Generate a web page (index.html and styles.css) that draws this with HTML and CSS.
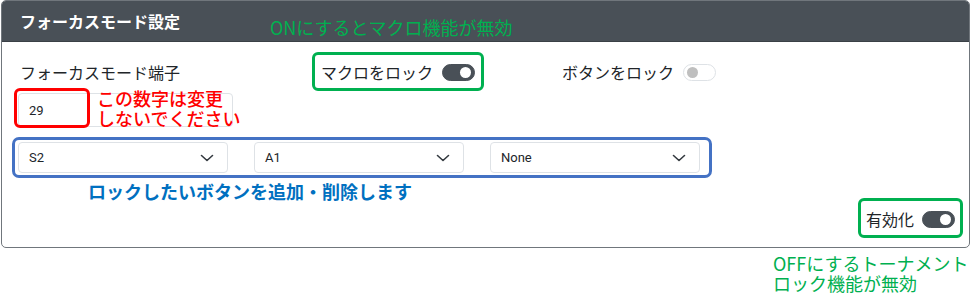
FILE: index.html
```html
<!DOCTYPE html>
<html lang="ja">
<head>
    <meta charset="UTF-8">
    <title>フォーカスモード設定</title>
    <link rel="stylesheet" href="styles.css">
</head>
<body>
    <div class="shot">
        <div class="card">
            <div class="card-header">
                <h5>フォーカスモード設定</h5>
            </div>
            <div class="card-body">
                <div class="row-top">
                    <div class="field">
                        <label class="field-label">フォーカスモード端子</label>
                        <input class="form-input" type="text" value="29" readonly>
                    </div>
                    <div class="switch-cell">
                        <span>マクロをロック</span>
                        <span class="switch on"></span>
                    </div>
                    <div class="switch-cell">
                        <span>ボタンをロック</span>
                        <span class="switch"></span>
                    </div>
                </div>

                <div class="select-row">
                    <div class="select">S2
                        <svg class="chev" width="14" height="8" viewBox="0 0 14 8"><path d="M1.5 1.5 L7 6.5 L12.5 1.5" /></svg>
                    </div>
                    <div class="select">A1
                        <svg class="chev" width="14" height="8" viewBox="0 0 14 8"><path d="M1.5 1.5 L7 6.5 L12.5 1.5" /></svg>
                    </div>
                    <div class="select">None
                        <svg class="chev" width="14" height="8" viewBox="0 0 14 8"><path d="M1.5 1.5 L7 6.5 L12.5 1.5" /></svg>
                    </div>
                </div>

                <div class="enable-row">
                    <span>有効化</span>
                    <span class="switch on"></span>
                </div>
            </div>
        </div>

        <!-- annotations drawn over the screenshot -->
        <div class="note note-green note-head">ONにするとマクロ機能が無効</div>
        <div class="mark mark-red mark-input"></div>
        <div class="note note-red note-input">この数字は変更<br>しないでください</div>
        <div class="mark mark-green mark-macro"></div>
        <div class="mark mark-blue mark-selects"></div>
        <div class="note note-blue note-selects">ロックしたいボタンを追加・削除します</div>
        <div class="mark mark-green mark-enable"></div>
        <div class="note note-green note-enable">OFFにするトーナメント<br>ロック機能が無効</div>
    </div>
</body>
</html>
```

FILE: styles.css
```css
body {
    margin: 0;
    background: #fff;
    font-family: "Noto Sans CJK JP", "Noto Sans", sans-serif;
    color: #212529;
}
.shot {
    position: relative;
    width: 972px;
    height: 295px;
}
.card {
    margin-left: 1px;
    width: 969px;
    box-sizing: border-box;
    border: 1px solid #70767c;
    border-radius: 5px;
    overflow: hidden;
}
.card-header {
    height: 41px;
    box-sizing: border-box;
    background: #495057;
    border-bottom: 1px solid #3a4046;
    padding: 0 18px;
    display: flex;
    align-items: center;
}
.card-header h5 {
    margin: 0;
    color: #fff;
    font-size: 16px;
    font-weight: bold;
    line-height: 24px;
}
.card-body {
    padding: 18px 14px 16px 16px;
    font-size: 16px;
    line-height: 24px;
}
.row-top {
    display: grid;
    grid-template-columns: 236px 232px 241px;
    align-items: start;
}
.field-label {
    display: block;
    padding-left: 2px;
}
.form-input {
    display: block;
    margin-top: 9px;
    width: 215px;
    height: 34px;
    box-sizing: border-box;
    border: 1px solid #dee2e6;
    border-radius: 4px;
    padding: 0 10px;
    font-family: Roboto, sans-serif;
    font-size: 13px;
    color: #212529;
    outline: none;
}
.switch-cell {
    display: flex;
    align-items: center;
    justify-content: flex-end;
    gap: 9px;
    padding-right: 11px;
    height: 24px;
}
.switch {
    position: relative;
    width: 33px;
    height: 17px;
    box-sizing: border-box;
    border: 1px solid #dee2e6;
    border-radius: 9px;
    background: #fff;
}
.switch::after {
    content: "";
    position: absolute;
    top: 2px;
    left: 3px;
    width: 11px;
    height: 11px;
    border-radius: 50%;
    background: #bfbfbf;
}
.switch.on {
    background: #495057;
    border-color: #495057;
}
.switch.on::after {
    left: auto;
    right: 3px;
    background: #fff;
}
.select-row {
    display: flex;
    gap: 26px;
    margin-top: 15px;
}
.select {
    width: 210px;
    height: 31px;
    box-sizing: border-box;
    border: 1px solid #dee2e6;
    border-radius: 4px;
    padding: 0 13px 0 10px;
    display: flex;
    align-items: center;
    justify-content: space-between;
    font-family: Roboto, sans-serif;
    font-size: 13px;
    color: #212529;
}
.chev path {
    fill: none;
    stroke: #343a40;
    stroke-width: 1.6;
    stroke-linecap: round;
    stroke-linejoin: round;
}
.enable-row {
    display: flex;
    align-items: center;
    justify-content: flex-end;
    gap: 8px;
    margin-top: 34px;
    height: 24px;
}

/* annotation overlay */
.mark {
    position: absolute;
    box-sizing: border-box;
    border: 3px solid;
    border-radius: 6px;
}
.mark-red { border-color: #ff0000; }
.mark-green { border-color: #00b050; }
.mark-blue { border-color: #4472c4; border-radius: 7px; }
.mark-input { left: 14px; top: 88px; width: 76px; height: 40px; }
.mark-macro { left: 312px; top: 52px; width: 172px; height: 39px; }
.mark-selects { left: 12px; top: 137px; width: 700px; height: 41px; }
.mark-enable { left: 858px; top: 198px; width: 105px; height: 40px; }

.note {
    position: absolute;
    font-size: 18px;
    white-space: nowrap;
}
.note-green { color: #00b050; }
.note-red { color: #ff0000; font-weight: 500; }
.note-blue { color: #0070c0; font-weight: bold; }
.note-head { left: 270px; top: 16px; line-height: 22px; }
.note-input { left: 97px; top: 88px; line-height: 20px; }
.note-selects { left: 88px; top: 180px; line-height: 22px; }
.note-enable { left: 773px; top: 253px; line-height: 20px; }
```
